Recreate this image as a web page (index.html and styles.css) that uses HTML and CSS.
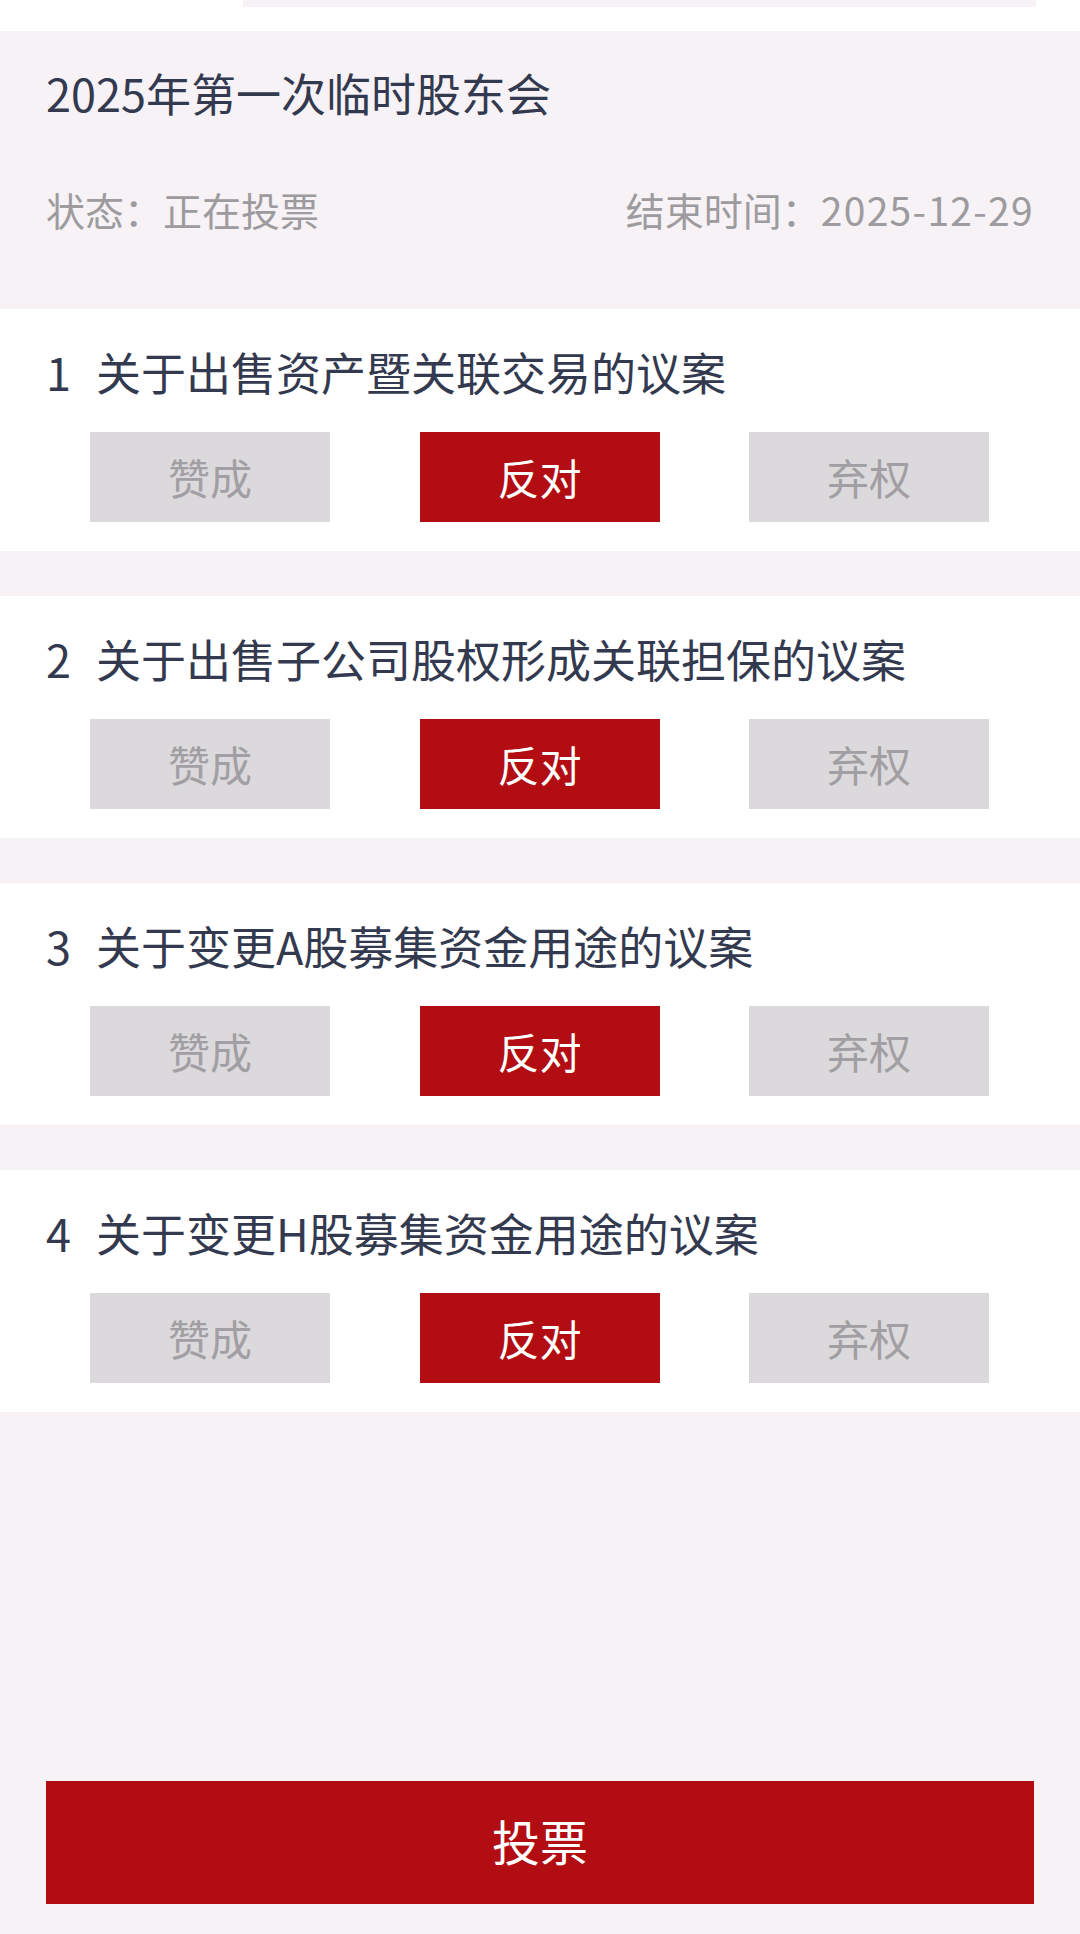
FILE: index.html
```html
<!DOCTYPE html>
<html lang="zh-CN">
<head>
    <meta charset="UTF-8">
    <meta name="viewport" content="width=device-width, initial-scale=1.0">
    <title>股东会投票</title>
    <link rel="stylesheet" href="styles.css">
</head>
<body>
    <div class="topbar">
        <div class="topbar-inner"></div>
    </div>

    <div class="meeting">
        <div class="meeting-title">2025年第一次临时股东会</div>
        <div class="meeting-info">
            <span>状态：正在投票</span>
            <span>结束时间：<span class="date">2025-12-29</span></span>
        </div>
    </div>

    <div class="list">
        <div class="item">
            <div class="item-title"><span class="num">1</span>关于出售资产暨关联交易的议案</div>
            <div class="btns">
                <div class="btn">赞成</div>
                <div class="btn on">反对</div>
                <div class="btn">弃权</div>
            </div>
        </div>
        <div class="item">
            <div class="item-title"><span class="num">2</span>关于出售子公司股权形成关联担保的议案</div>
            <div class="btns">
                <div class="btn">赞成</div>
                <div class="btn on">反对</div>
                <div class="btn">弃权</div>
            </div>
        </div>
        <div class="item">
            <div class="item-title"><span class="num">3</span>关于变更A股募集资金用途的议案</div>
            <div class="btns">
                <div class="btn">赞成</div>
                <div class="btn on">反对</div>
                <div class="btn">弃权</div>
            </div>
        </div>
        <div class="item">
            <div class="item-title"><span class="num">4</span>关于变更H股募集资金用途的议案</div>
            <div class="btns">
                <div class="btn">赞成</div>
                <div class="btn on">反对</div>
                <div class="btn">弃权</div>
            </div>
        </div>
    </div>

    <div class="footer">
        <div class="submit">投票</div>
    </div>
</body>
</html>
```

FILE: styles.css
```css
/*初始化*/
html,body{
    margin: 0;
    padding: 0;
}
body{
    width: 1080px;
    height: 1934px;
    background: #f6f2f6;
    font-family: "Noto Sans CJK SC", "Noto Sans", sans-serif;
    display: flex;
    flex-direction: column;
}

/*顶部*/
.topbar{
    height: 31px;
    background: #fff;
    padding-left: 243px;
    padding-right: 44px;
}
.topbar-inner{
    height: 7px;
    background: #f6f2f6;
}

/*会议信息*/
.meeting{
    height: 278px;
    box-sizing: border-box;
    padding: 30px 46px 0;
}
.meeting-title{
    font-size: 45px;
    line-height: 64px;
    color: #333a4f;
}
.meeting-info{
    margin-top: 59px;
    display: flex;
    justify-content: space-between;
    font-size: 39px;
    line-height: 50px;
    color: #9d9b9e;
}
.date{
    letter-spacing: 1.3px;
}

/*议案列表*/
.list{
    display: flex;
    flex-direction: column;
    gap: 45px;
}
.item{
    height: 242px;
    box-sizing: border-box;
    background: #fff;
    padding-top: 31px;
}
.item-title{
    padding-left: 46px;
    font-size: 45px;
    line-height: 64px;
    color: #333a4f;
    white-space: nowrap;
}
.num{
    display: inline-block;
    width: 50px;
}
.btns{
    margin-top: 28px;
    padding: 0 91px 0 90px;
    display: flex;
    justify-content: space-between;
}
.btn{
    width: 240px;
    height: 90px;
    line-height: 90px;
    text-align: center;
    font-size: 42px;
    background: #dcd9dc;
    color: #a19fa3;
}
.btn.on{
    background: #b20d12;
    color: #fff;
}

/*底部按钮*/
.footer{
    margin-top: auto;
    padding: 0 46px 30px;
}
.submit{
    height: 123px;
    line-height: 118px;
    text-align: center;
    background: #b20d12;
    color: #fff;
    font-size: 48px;
}
```
